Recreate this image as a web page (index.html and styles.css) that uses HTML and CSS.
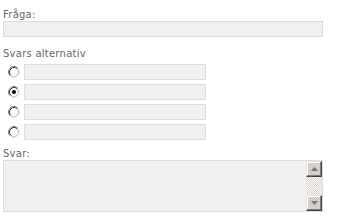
FILE: index.html
```html
<!DOCTYPE html>
<html>
<head>
<meta charset="utf-8">
<link rel="stylesheet" href="styles.css">
</head>
<body>
<div class="wrap">
  <div class="label">Fråga:</div>
  <div class="field wide"></div>

  <div class="label group">Svars alternativ</div>
  <div class="options">
    <div class="opt">
      <svg class="radio" viewBox="0 0 12 12" width="12" height="12"><circle cx="6" cy="6" r="4.5" fill="#fff"/><path d="M2.11 9.89A5.5 5.5 0 0 1 9.89 2.11" fill="none" stroke="#808080"/><path d="M9.89 2.11A5.5 5.5 0 0 1 2.11 9.89" fill="none" stroke="#e4e4e4"/><path d="M2.82 9.18A4.5 4.5 0 0 1 9.18 2.82" fill="none" stroke="#303030"/><path d="M9.18 2.82A4.5 4.5 0 0 1 2.82 9.18" fill="none" stroke="#c8c4bc"/></svg>
      <div class="field short"></div>
    </div>
    <div class="opt">
      <svg class="radio" viewBox="0 0 12 12" width="12" height="12"><circle cx="6" cy="6" r="4.5" fill="#fff"/><path d="M2.11 9.89A5.5 5.5 0 0 1 9.89 2.11" fill="none" stroke="#808080"/><path d="M9.89 2.11A5.5 5.5 0 0 1 2.11 9.89" fill="none" stroke="#e4e4e4"/><path d="M2.82 9.18A4.5 4.5 0 0 1 9.18 2.82" fill="none" stroke="#303030"/><path d="M9.18 2.82A4.5 4.5 0 0 1 2.82 9.18" fill="none" stroke="#c8c4bc"/><circle cx="6" cy="6" r="2" fill="#000"/></svg>
      <div class="field short"></div>
    </div>
    <div class="opt">
      <svg class="radio" viewBox="0 0 12 12" width="12" height="12"><circle cx="6" cy="6" r="4.5" fill="#fff"/><path d="M2.11 9.89A5.5 5.5 0 0 1 9.89 2.11" fill="none" stroke="#808080"/><path d="M9.89 2.11A5.5 5.5 0 0 1 2.11 9.89" fill="none" stroke="#e4e4e4"/><path d="M2.82 9.18A4.5 4.5 0 0 1 9.18 2.82" fill="none" stroke="#303030"/><path d="M9.18 2.82A4.5 4.5 0 0 1 2.82 9.18" fill="none" stroke="#c8c4bc"/></svg>
      <div class="field short"></div>
    </div>
    <div class="opt">
      <svg class="radio" viewBox="0 0 12 12" width="12" height="12"><circle cx="6" cy="6" r="4.5" fill="#fff"/><path d="M2.11 9.89A5.5 5.5 0 0 1 9.89 2.11" fill="none" stroke="#808080"/><path d="M9.89 2.11A5.5 5.5 0 0 1 2.11 9.89" fill="none" stroke="#e4e4e4"/><path d="M2.82 9.18A4.5 4.5 0 0 1 9.18 2.82" fill="none" stroke="#303030"/><path d="M9.18 2.82A4.5 4.5 0 0 1 2.82 9.18" fill="none" stroke="#c8c4bc"/></svg>
      <div class="field short"></div>
    </div>
  </div>

  <div class="label answer">Svar:</div>
  <div class="textarea">
    <div class="ta-body"></div>
    <div class="scrollbar">
      <div class="sb-btn"><svg viewBox="0 0 7 4" width="7" height="4"><path d="M3.5 0L7 4H0z" fill="#777"/></svg></div>
      <div class="sb-track"></div>
      <div class="sb-btn"><svg viewBox="0 0 7 4" width="7" height="4"><path d="M0 0H7L3.5 4z" fill="#777"/></svg></div>
    </div>
  </div>
</div>
</body>
</html>
```

FILE: styles.css
```css
html, body {
  margin: 0;
  padding: 0;
  background: #fff;
}
body {
  font-family: "DejaVu Sans", Verdana, sans-serif;
  font-size: 10px;
  color: #666;
}
.wrap {
  padding: 9px 0 0 3px;
  width: 320px;
}
.label {
  height: 12px;
  line-height: 12px;
  white-space: nowrap;
  letter-spacing: 0.25px;
}
.label.group {
  margin-top: 11px;
  margin-bottom: 4px;
}
.label.answer {
  margin-top: 8px;
}
.field {
  box-sizing: border-box;
  height: 16px;
  background: #f0f0f0;
  border: 1px solid #dcdcdc;
}
.field.wide {
  width: 320px;
}
.field.short {
  width: 182px;
}
.options {
  display: flex;
  flex-direction: column;
  gap: 4px;
}
.opt {
  display: flex;
  align-items: center;
  gap: 4px;
  height: 16px;
}
.radio {
  display: block;
  margin-left: 5px;
  flex: none;
}
.textarea {
  box-sizing: border-box;
  width: 320px;
  height: 52px;
  border: 1px solid #dcdcdc;
  background: #f0f0f0;
  display: flex;
}
.ta-body {
  flex: 1;
}
.scrollbar {
  width: 16px;
  display: flex;
  flex-direction: column;
}
.sb-btn {
  box-sizing: border-box;
  height: 16px;
  background: #d4d0c8;
  border-top: 1px solid #e8e6e2;
  border-left: 1px solid #e8e6e2;
  border-right: 1px solid #404040;
  border-bottom: 1px solid #404040;
  box-shadow: inset -1px -1px 0 #808080, inset 1px 1px 0 #fff;
  display: flex;
  align-items: center;
  justify-content: center;
}
.sb-btn svg {
  display: block;
}
.sb-track {
  flex: 1;
  background-image: conic-gradient(#fff 25%, #d4d0c8 0 50%, #fff 0 75%, #d4d0c8 0);
  background-size: 2px 2px;
}
```
